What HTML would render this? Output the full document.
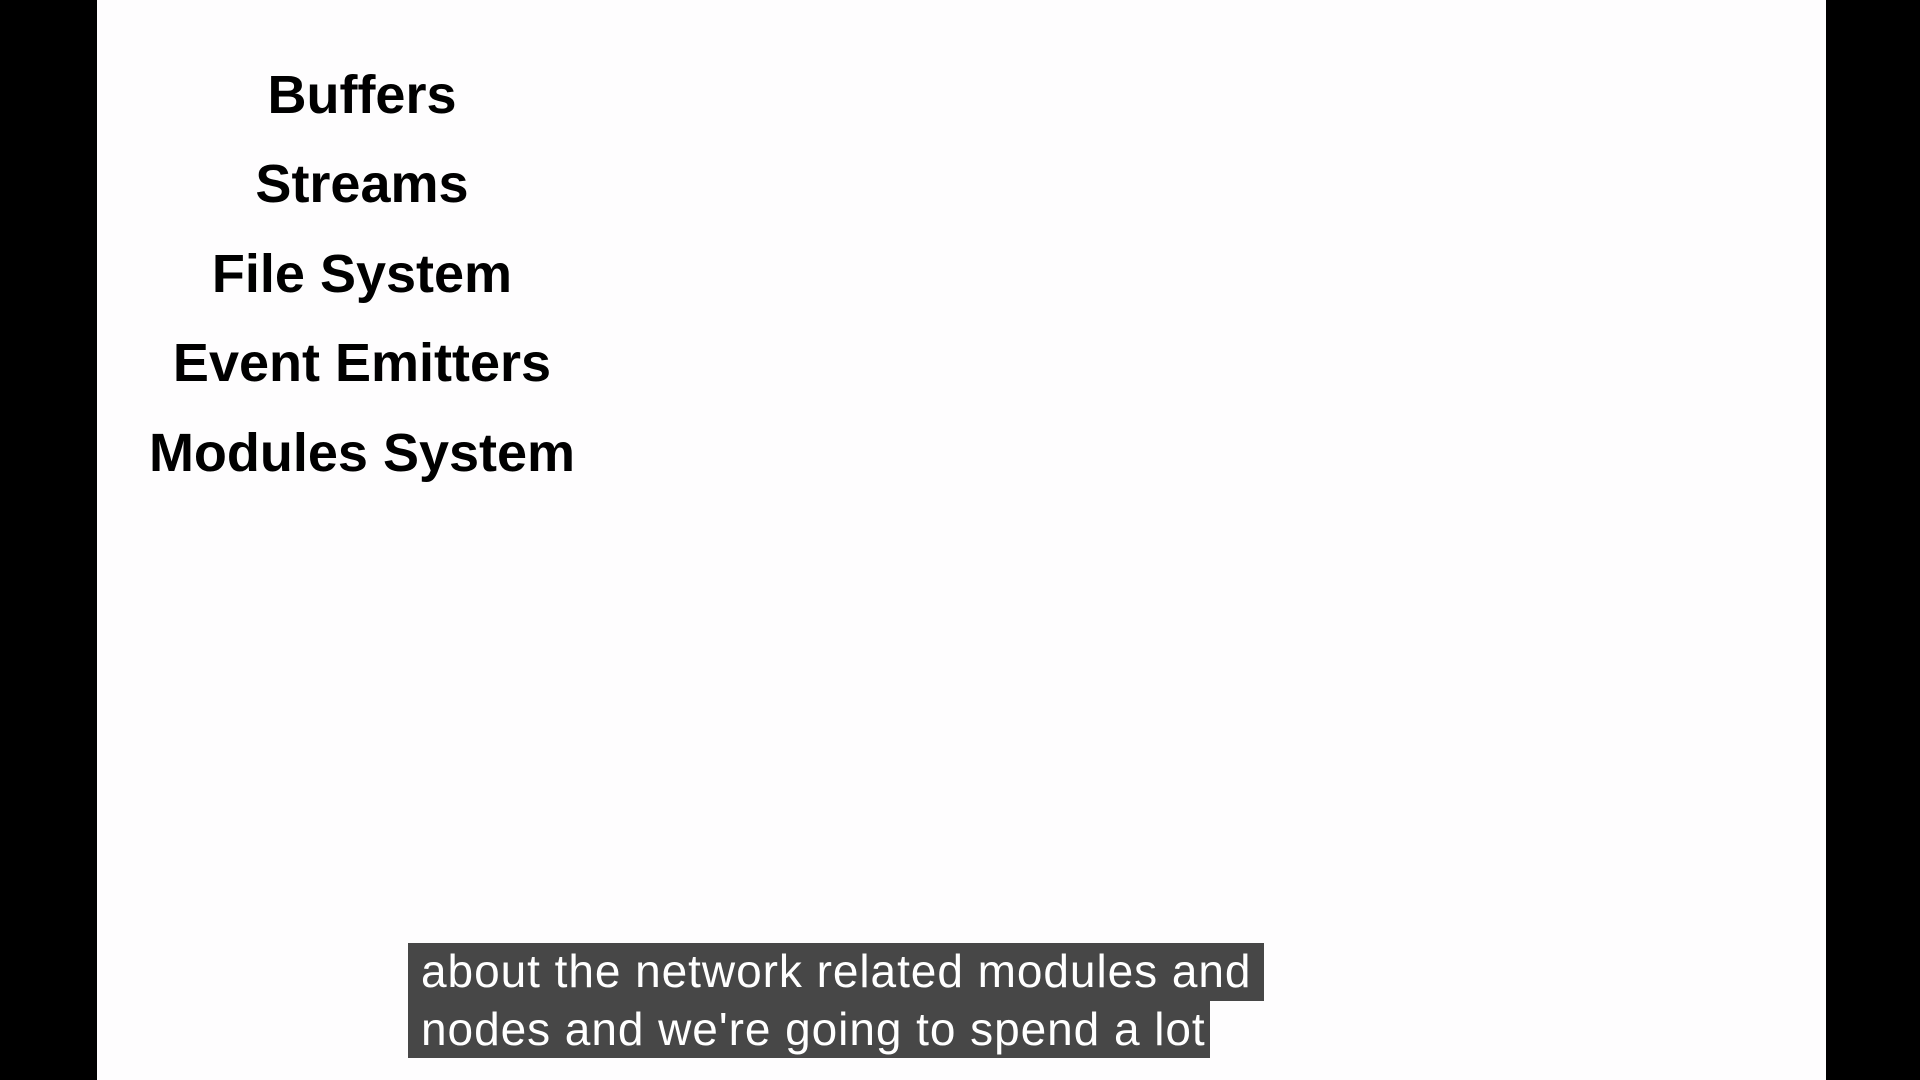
<!DOCTYPE html>
<html><head><meta charset="utf-8"><style>
html,body{margin:0;padding:0;width:1920px;height:1080px;overflow:hidden;background:#000;}
.slide{position:absolute;left:97px;top:0;width:1729px;height:1080px;background:#fefdfe;}
.h{position:absolute;left:0;width:724px;text-align:center;font-family:"Liberation Sans",Arial,sans-serif;font-weight:bold;font-size:54px;color:#000;line-height:60px;}
.cap{position:absolute;left:408px;font-family:"Liberation Sans",Arial,sans-serif;font-size:46px;color:#fff;line-height:57.5px;height:57.5px;background:#474747;padding:0 12px 0 13px;white-space:nowrap;letter-spacing:0.95px;box-sizing:border-box;overflow:hidden;}
</style></head><body>
<div class="slide"></div>
<div class="h" style="top:65px">Buffers</div>
<div class="h" style="top:154px">Streams</div>
<div class="h" style="top:244px">File System</div>
<div class="h" style="top:333px">Event Emitters</div>
<div class="h" style="top:423px">Modules System</div>
<div class="cap" style="top:943px;width:856px">about the network related modules and</div>
<div class="cap" style="top:1000.5px;width:802px">nodes and we're going to spend a lot</div>
</body></html>
